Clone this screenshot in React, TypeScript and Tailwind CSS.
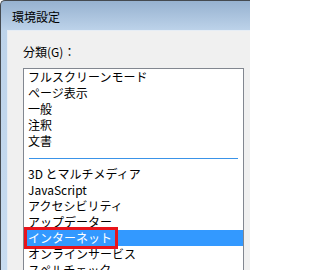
const items = ['フルスクリーンモード', 'ページ表示', '一般', '注釈', '文書']
const items2 = [
  '3D とマルチメディア',
  'JavaScript',
  'アクセシビリティ',
  'アップデーター',
  'インターネット',
  'オンラインサービス',
  'スペルチェック',
]
const selected = 'インターネット'

function Row({ label }: { label: string }) {
  const active = label === selected
  return (
    <div
      className={`relative h-[16px] pl-[4px] leading-[16px] whitespace-nowrap ${
        active ? 'bg-[#3399ff] text-white' : 'text-black'
      }`}
    >
      {label}
      {active && (
        <div className="absolute left-0 top-[-3px] h-[22px] w-[94px] border-[3px] border-[#e8141b]" />
      )}
    </div>
  )
}

export default function App() {
  return (
    <div
      className="w-[250px] h-[270px] overflow-hidden bg-white text-[12px]"
      style={{ fontFamily: '"Noto Sans CJK JP", "Noto Sans", sans-serif' }}
    >
      <div className="flex h-full flex-col rounded-tl-[5px] border-l border-t border-[#454a50] bg-linear-to-b from-[#97b2d0] via-[#bdd3ea] via-[11%] to-[#c8dcf0]">
        <div className="h-[29px] shrink-0 pl-[11px] pt-[8px] leading-[16px] text-black">
          環境設定
        </div>
        <div className="ml-[6px] flex-1 border-l border-t border-[#e6edf5] bg-[#f0f0f0] pl-[15px] pt-[13px]">
          <div className="h-[16px] leading-[16px] text-black">分類(G)：</div>
          <div className="mt-[8px] w-[221px] border border-[#828790] bg-white">
            {items.map((label) => (
              <Row key={label} label={label} />
            ))}
            <div className="h-[17px] px-[5px] pt-[9px]">
              <div className="h-px bg-[#3a93e8]" />
            </div>
            {items2.map((label) => (
              <Row key={label} label={label} />
            ))}
          </div>
        </div>
      </div>
    </div>
  )
}
